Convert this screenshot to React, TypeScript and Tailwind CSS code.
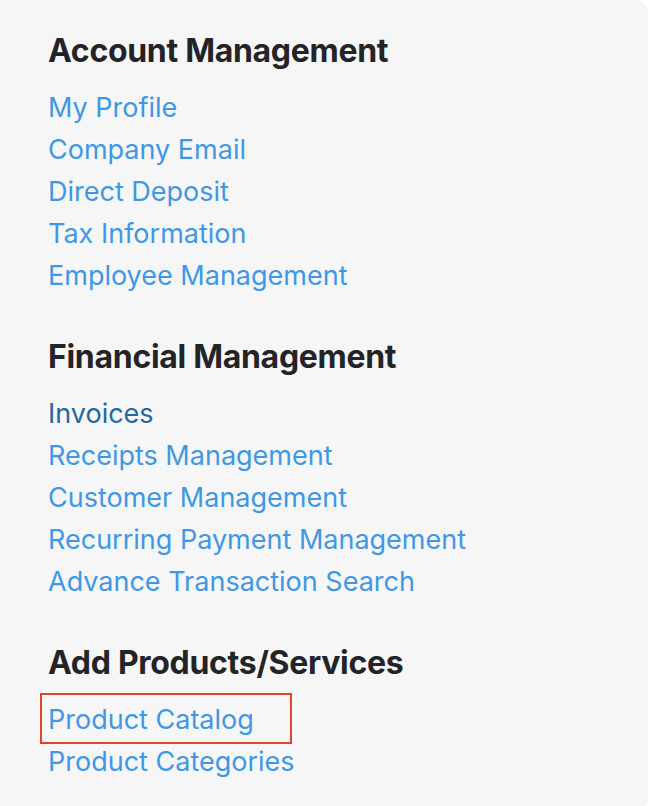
const sections = [
  {
    title: "Account Management",
    links: ["My Profile", "Company Email", "Direct Deposit", "Tax Information", "Employee Management"],
  },
  {
    title: "Financial Management",
    links: [
      "Invoices",
      "Receipts Management",
      "Customer Management",
      "Recurring Payment Management",
      "Advance Transaction Search",
    ],
  },
  {
    title: "Add Products/Services",
    links: ["Product Catalog", "Product Categories"],
  },
];

export default function App() {
  return (
    <div className="h-[806px] w-[648px] bg-white font-['Inter','Liberation_Sans',sans-serif]">
      <nav className="flex h-full flex-col gap-[40px] rounded-tr-[14px] rounded-br-[4px] bg-[#f6f6f6] pl-[48px] pt-[31px]">
        {sections.map((s) => (
          <section key={s.title}>
            <h2 className="text-[32px] leading-[40px] font-bold tracking-[-0.3px] text-[#222427]">{s.title}</h2>
            <ul className="mt-[16px]">
              {s.links.map((l) => (
                <li key={l} className="relative text-[27px] leading-[42px]">
                  <a href="#" className={l === "Invoices" ? "text-[#2468a2]" : "text-[#3e98e5]"}>
                    {l}
                  </a>
                  {l === "Product Catalog" && (
                    <span className="absolute -left-[8px] -top-[6px] h-[51px] w-[252px] border-2 border-[#e5412d]" />
                  )}
                </li>
              ))}
            </ul>
          </section>
        ))}
      </nav>
    </div>
  );
}
